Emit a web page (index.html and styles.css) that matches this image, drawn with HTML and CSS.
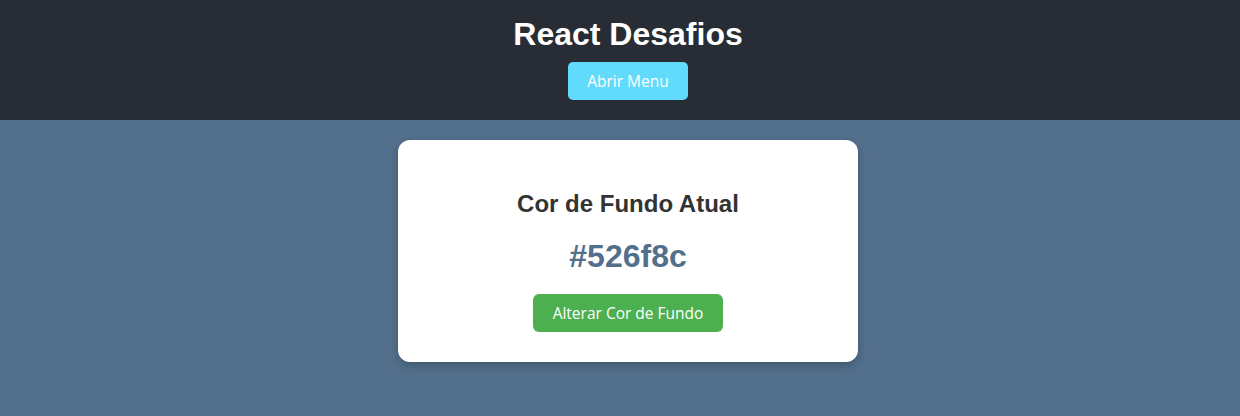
FILE: index.html
```html
<!DOCTYPE html>
<html lang="pt">
<head>
<meta charset="utf-8">
<title>React Desafios</title>
<link rel="stylesheet" href="styles.css">
</head>
<body>
<header class="app-header">
  <h1 class="app-title">React Desafios</h1>
  <button class="menu-btn">Abrir Menu</button>
</header>
<main class="app-main">
  <section class="card">
    <h2 class="card-title">Cor de Fundo Atual</h2>
    <p class="color-code">#526f8c</p>
    <button class="change-btn">Alterar Cor de Fundo</button>
  </section>
</main>
</body>
</html>
```
FILE: styles.css
```css
html, body {
  margin: 0;
  padding: 0;
}
body {
  background: #526f8c;
  font-family: "Liberation Sans", Arial, sans-serif;
  height: 416px;
}
.app-header {
  background: #282c34;
  height: 120px;
  box-sizing: border-box;
  padding: 16px 0 0 16px;
  display: flex;
  flex-direction: column;
  align-items: center;
}
.app-title {
  margin: 0 0 9px;
  font-size: 32px;
  line-height: 37px;
  font-weight: bold;
  color: #ffffff;
}
.menu-btn, .change-btn {
  font-family: "Open Sans", "Noto Sans", sans-serif;
  font-size: 15.5px;
  color: #ffffff;
  border: none;
  height: 38px;
  padding: 0 18px;
  border-radius: 5px;
  cursor: pointer;
}
.menu-btn {
  background: #61dafb;
  width: 120px;
}
.app-main {
  display: flex;
  justify-content: center;
  padding: 20px 0 0 16px;
}
.card {
  width: 460px;
  box-sizing: border-box;
  background: #ffffff;
  border-radius: 12px;
  padding: 50px 20px 30px;
  box-shadow: 0 4px 10px rgba(0, 0, 0, 0.2);
  display: flex;
  flex-direction: column;
  align-items: center;
}
.card-title {
  margin: 0 0 20px;
  font-size: 24px;
  line-height: 28px;
  font-weight: bold;
  color: #333333;
}
.color-code {
  margin: 0 0 19px;
  font-size: 32px;
  line-height: 37px;
  font-weight: bold;
  color: #526f8c;
}
.change-btn {
  background: #4caf50;
  width: 190px;
  border-radius: 6px;
}
```
